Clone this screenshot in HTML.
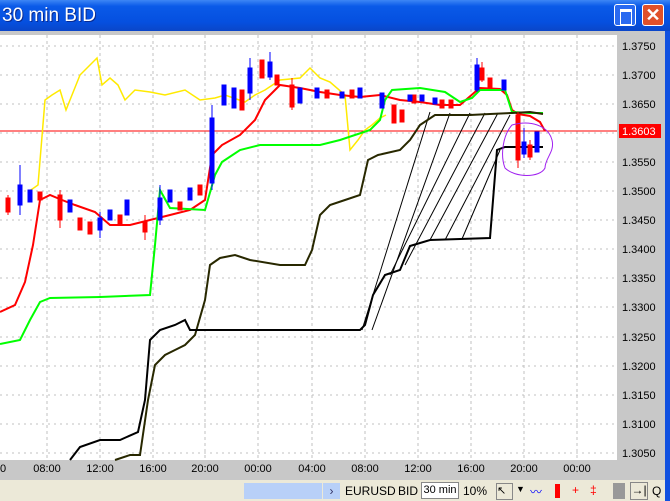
<!DOCTYPE html>
<html><head><meta charset="utf-8"><style>
body{margin:0;width:670px;height:501px;overflow:hidden;background:#d4d0c8;font-family:"Liberation Sans",sans-serif;position:relative}
.title{position:absolute;left:0;top:0;width:670px;height:31px;background:linear-gradient(#3d86f5,#0a5ae8 20%,#0550e0 70%,#0a46c8);color:#fff;font-size:19px;line-height:31px;padding-left:2px;box-sizing:border-box;text-shadow:1px 1px #0a2a90}
.btn{position:absolute;top:4px;width:22px;height:22px;border:1px solid #fff;border-radius:3px;box-sizing:border-box}
.strip{position:absolute;left:0;top:31px;width:665px;height:450px;background:#c8c8c8}
.rb{position:absolute;right:0;top:31px;width:5px;height:470px;background:#1050e0}
.tb{position:absolute;left:0;top:480px;width:665px;height:21px;background:#ece9d8;font-size:12px;white-space:nowrap}
.tb span{white-space:nowrap}
</style></head><body>
<div class="title">30 min BID</div>
<div class="btn" style="left:614px;background:#2a6af0"><div style="position:absolute;left:5px;top:4px;width:10px;height:12px;border:1px solid #fff;border-top-width:3px"></div></div>
<div class="btn" style="left:642px;background:#e0502a;color:#fff;font-size:18px;text-align:center;line-height:20px;font-weight:bold">✕</div>
<div class="strip"></div>
<div class="rb"></div>
<svg style="position:absolute;left:0;top:0" width="670" height="501">
<rect x="0" y="35" width="617" height="425" fill="#fff"/>
<g stroke="#c0c0c0" stroke-dasharray="3,3" stroke-width="1">
<line x1="47" y1="35" x2="47" y2="460"/><line x1="100" y1="35" x2="100" y2="460"/><line x1="153" y1="35" x2="153" y2="460"/><line x1="205" y1="35" x2="205" y2="460"/><line x1="258" y1="35" x2="258" y2="460"/><line x1="312" y1="35" x2="312" y2="460"/><line x1="365" y1="35" x2="365" y2="460"/><line x1="418" y1="35" x2="418" y2="460"/><line x1="471" y1="35" x2="471" y2="460"/><line x1="524" y1="35" x2="524" y2="460"/><line x1="577" y1="35" x2="577" y2="460"/>
</g>
<g stroke="#c0c0c0" stroke-dasharray="2,4">
<line x1="0" y1="46" x2="617" y2="46"/><line x1="0" y1="75" x2="617" y2="75"/><line x1="0" y1="104" x2="617" y2="104"/><line x1="0" y1="133" x2="617" y2="133"/><line x1="0" y1="162" x2="617" y2="162"/><line x1="0" y1="191" x2="617" y2="191"/><line x1="0" y1="220" x2="617" y2="220"/><line x1="0" y1="249" x2="617" y2="249"/><line x1="0" y1="278" x2="617" y2="278"/><line x1="0" y1="307" x2="617" y2="307"/><line x1="0" y1="337" x2="617" y2="337"/><line x1="0" y1="366" x2="617" y2="366"/><line x1="0" y1="395" x2="617" y2="395"/><line x1="0" y1="424" x2="617" y2="424"/><line x1="0" y1="453" x2="617" y2="453"/>
</g>
<line x1="0" y1="131" x2="617" y2="131" stroke="#f00"/>
<g stroke="#000" stroke-width="1">
<line x1="362" y1="330" x2="430" y2="112"/><line x1="372" y1="330" x2="450" y2="113"/><line x1="390" y1="275" x2="470" y2="113"/><line x1="405" y1="265" x2="485" y2="113"/><line x1="430" y1="240" x2="498" y2="113"/><line x1="445" y1="240" x2="510" y2="115"/><line x1="462" y1="239" x2="500" y2="150"/>
</g>
<polyline fill="none" stroke="#ffea00" stroke-width="1.5" points="28,192 38,185 45,100 52,95 60,90 66,110 72,95 80,75 90,65 97,58 102,85 110,78 118,85 125,100 135,90 150,92 165,95 185,90 200,100 215,98 225,95 245,102 255,95 265,90 280,80 300,78 310,68 320,78 330,82 345,95 350,150 358,140 365,130 372,125 380,118 386,115"/>
<polyline fill="none" stroke="#f00" stroke-width="2" points="0,312 15,305 25,282 33,245 40,200 50,195 62,200 75,205 95,212 110,225 130,225 150,220 170,215 190,210 205,200 212,155 222,145 240,135 255,120 265,100 280,85 300,88 320,92 340,95 360,97 380,95 400,100 420,102 440,105 460,105 475,92 480,88 500,89 507,95 512,110 518,114 530,116 540,122 545,131"/>
<polyline fill="none" stroke="#0f0" stroke-width="2" points="0,344 20,340 30,320 40,302 50,298 100,297 150,295 155,245 160,190 170,208 205,210 215,175 222,162 240,150 260,145 320,145 340,140 370,130 380,120 385,100 392,90 420,88 445,92 460,102 472,98 480,90 505,90 512,112 530,113 543,113"/>
<polyline fill="none" stroke="#282800" stroke-width="2" points="115,460 130,455 140,455 148,400 155,365 165,355 175,350 185,345 195,335 205,300 210,265 220,258 235,255 250,260 280,265 305,265 312,250 320,215 330,205 345,200 360,195 368,160 378,155 400,150 410,140 420,125 435,115 470,115 490,114 512,113 530,112 543,114"/>
<polyline fill="none" stroke="#000" stroke-width="2" points="70,460 80,447 100,440 120,440 138,432 145,400 150,340 160,330 175,325 185,320 190,330 360,330 365,325 373,295 385,275 400,270 410,246 430,240 490,238 497,150 505,147 543,147"/>
<g stroke-width="1">
<g fill="#f00" stroke="#f00"><line x1="8" y1="195" x2="8" y2="215"/><rect x="6" y="198" width="4" height="14"/><rect x="38" y="192" width="4" height="8"/><rect x="58" y="195" width="4" height="25"/><line x1="60" y1="190" x2="60" y2="228"/><rect x="78" y="218" width="4" height="12"/><rect x="88" y="222" width="4" height="12"/><rect x="118" y="215" width="4" height="10"/><rect x="143" y="222" width="4" height="10"/><line x1="145" y1="215" x2="145" y2="240"/><rect x="178" y="202" width="4" height="8"/><rect x="198" y="185" width="4" height="10"/><rect x="240" y="90" width="4" height="20"/><rect x="260" y="60" width="4" height="18"/><rect x="275" y="75" width="4" height="10"/><rect x="290" y="85" width="4" height="22"/><line x1="292" y1="78" x2="292" y2="110"/><rect x="325" y="90" width="4" height="8"/><rect x="350" y="90" width="4" height="8"/><rect x="392" y="105" width="4" height="18"/><rect x="400" y="110" width="4" height="12"/><rect x="412" y="95" width="4" height="8"/><rect x="440" y="100" width="4" height="8"/><rect x="449" y="100" width="4" height="8"/><rect x="480" y="68" width="4" height="12"/><line x1="482" y1="62" x2="482" y2="82"/><rect x="488" y="78" width="4" height="10"/><rect x="516" y="115" width="4" height="45"/><line x1="518" y1="112" x2="518" y2="168"/><rect x="528" y="145" width="4" height="12"/><line x1="530" y1="140" x2="530" y2="160"/></g>
<g fill="#00f" stroke="#00f"><rect x="18" y="185" width="4" height="20"/><line x1="20" y1="165" x2="20" y2="215"/><rect x="28" y="190" width="4" height="12"/><rect x="68" y="200" width="4" height="12"/><rect x="98" y="218" width="4" height="12"/><line x1="100" y1="212" x2="100" y2="238"/><rect x="108" y="210" width="4" height="10"/><rect x="125" y="200" width="4" height="15"/><rect x="158" y="198" width="4" height="22"/><line x1="160" y1="185" x2="160" y2="225"/><rect x="168" y="190" width="4" height="12"/><rect x="188" y="188" width="4" height="12"/><rect x="210" y="118" width="4" height="65"/><line x1="212" y1="105" x2="212" y2="190"/><rect x="222" y="85" width="4" height="20"/><rect x="232" y="88" width="4" height="20"/><rect x="248" y="68" width="4" height="25"/><line x1="250" y1="58" x2="250" y2="100"/><rect x="268" y="62" width="4" height="15"/><line x1="270" y1="52" x2="270" y2="80"/><rect x="298" y="88" width="4" height="15"/><rect x="315" y="88" width="4" height="10"/><rect x="340" y="92" width="4" height="6"/><rect x="358" y="88" width="4" height="10"/><rect x="380" y="93" width="4" height="15"/><rect x="408" y="95" width="4" height="6"/><rect x="420" y="95" width="4" height="6"/><rect x="433" y="98" width="4" height="6"/><rect x="475" y="65" width="4" height="25"/><line x1="477" y1="58" x2="477" y2="92"/><rect x="502" y="80" width="4" height="10"/><rect x="522" y="142" width="4" height="12"/><line x1="524" y1="128" x2="524" y2="158"/><rect x="535" y="132" width="4" height="20"/></g>
</g>
<path d="M512,125 C530,120 548,125 552,140 C555,152 545,158 545,168 C540,178 515,178 505,168 C500,155 503,135 512,125Z" fill="none" stroke="#a020f0" stroke-width="1"/>
<g font-family="Liberation Sans,sans-serif" font-size="11" fill="#000">
<text x="622" y="50">1.3750</text><text x="622" y="79">1.3700</text><text x="622" y="108">1.3650</text><text x="622" y="166">1.3550</text><text x="622" y="195">1.3500</text><text x="622" y="224">1.3450</text><text x="622" y="253">1.3400</text><text x="622" y="282">1.3350</text><text x="622" y="311">1.3300</text><text x="622" y="341">1.3250</text><text x="622" y="370">1.3200</text><text x="622" y="399">1.3150</text><text x="622" y="428">1.3100</text><text x="622" y="457">1.3050</text>
</g>
<rect x="619" y="124" width="42" height="14" fill="#f00"/>
<text x="622" y="135" font-family="Liberation Sans,sans-serif" font-size="11" fill="#fff">1.3603</text>
<g font-family="Liberation Sans,sans-serif" font-size="11" fill="#000" text-anchor="middle">
<text x="3" y="472">0</text><text x="47" y="472">08:00</text><text x="100" y="472">12:00</text><text x="153" y="472">16:00</text><text x="205" y="472">20:00</text><text x="258" y="472">00:00</text><text x="312" y="472">04:00</text><text x="365" y="472">08:00</text><text x="418" y="472">12:00</text><text x="471" y="472">16:00</text><text x="524" y="472">20:00</text><text x="577" y="472">00:00</text>
</g>
</svg>
<div class="tb">
<div style="position:absolute;left:244px;top:3px;width:78px;height:16px;background:#b8d0f8"></div>
<div style="position:absolute;left:323px;top:3px;width:17px;height:16px;background:#b8d0f8;color:#336;text-align:center;font-size:12px;line-height:16px">›</div>
<span style="position:absolute;left:345px;top:4px">EURUSD</span>
<span style="position:absolute;left:398px;top:4px">BID</span>
<span style="position:absolute;left:421px;top:2px;width:36px;height:15px;border:1px solid #888;background:#fff;text-align:center;line-height:15px;font-size:11px">30 min</span>
<span style="position:absolute;left:463px;top:4px">10%</span>
<span style="position:absolute;left:496px;top:3px;width:15px;height:15px;border:1px solid #888;font-size:11px">↖</span>
<span style="position:absolute;left:516px;top:4px;font-size:9px">▼</span>
<span style="position:absolute;left:530px;top:3px;color:#00f">〰</span>
<div style="position:absolute;left:555px;top:4px;width:5px;height:14px;background:#f00"></div>
<span style="position:absolute;left:572px;top:3px;color:#f00">+</span>
<span style="position:absolute;left:590px;top:3px;color:#f00">‡</span>
<div style="position:absolute;left:613px;top:3px;width:12px;height:16px;background:#999"></div>
<span style="position:absolute;left:630px;top:2px;width:16px;height:16px;border:1px solid #888;text-align:center">→|</span>
<span style="position:absolute;left:652px;top:4px">Q</span>
</div>
</body></html>
